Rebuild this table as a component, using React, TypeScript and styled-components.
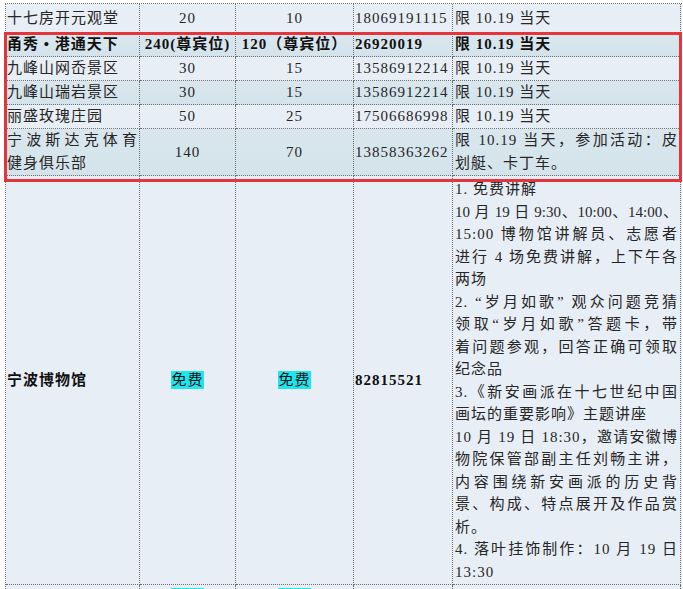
import React from "react";
import styled, { createGlobalStyle } from "styled-components";

const GlobalStyle = createGlobalStyle`
  html, body {
    margin: 0;
    padding: 0;
    background: #ffffff;
  }
  body {
    font-family: "Liberation Serif", "Noto Sans CJK SC", serif;
    font-size: 15px;
    color: #262626;
  }
`;

type Tone = "light" | "dark";
type Align = "left" | "center";

const LIGHT = "#e8eef5";
const DARK = "#d4e3eb";

const Sheet = styled.div`
  margin: 3px 0 0 5px;
  width: 676px;
  border-top: 1px dotted #6f6f6f;
  border-left: 1px dotted #6f6f6f;
  letter-spacing: 1px;
`;

const Row = styled.div<{ $tone: Tone; $bold?: boolean }>`
  display: grid;
  grid-template-columns: 134px 96px 118px 99px 228px;
  background: ${(p) =>
    p.$tone === "dark"
      ? `linear-gradient(180deg, #d9e6ee 0%, ${DARK} 100%)`
      : LIGHT};
  font-weight: ${(p) => (p.$bold ? 700 : 400)};
  color: ${(p) => (p.$bold ? "#111" : "#262626")};
`;

const Cell = styled.div<{ $align?: Align; $pad?: string; $strong?: boolean }>`
  display: flex;
  flex-direction: column;
  justify-content: center;
  box-sizing: border-box;
  min-width: 0;
  padding: ${(p) => p.$pad || "0 1px"};
  border-right: 1px dotted #6f6f6f;
  border-bottom: 1px dotted #6f6f6f;
  line-height: 23px;
  text-align: ${(p) => p.$align || "left"};
  white-space: nowrap;
  font-weight: ${(p) => (p.$strong ? 700 : "inherit")};
  color: ${(p) => (p.$strong ? "#111" : "inherit")};
`;

const TopCell = styled(Cell)`
  justify-content: flex-start;
  overflow: hidden;
`;

const Line = styled.div<{ $full?: boolean; $lh?: number; $tight?: boolean }>`
  text-align: ${(p) => (p.$full ? "justify" : "left")};
  text-align-last: ${(p) => (p.$full ? "justify" : "left")};
  line-height: ${(p) => (p.$lh ? `${p.$lh}px` : "23px")};
  letter-spacing: ${(p) => (p.$tight ? "0" : "1px")};
`;

const Marked = styled.span`
  background: #1ee6ef;
  color: #111;
  padding: 1px 0;
`;

const Highlighted = styled.div`
  position: relative;

  &::after {
    content: "";
    position: absolute;
    left: -2px;
    right: 0;
    top: -1px;
    bottom: -6px;
    border: 3px solid #e6343b;
    pointer-events: none;
    z-index: 2;
  }
`;

type Venue = {
  name: string[];
  adult: string;
  child: string;
  phone: string;
  note: string[];
  tone: Tone;
  bold?: boolean;
};

const venues: Venue[] = [
  {
    name: ["甬秀 • 港通天下"],
    adult: "240(尊宾位)",
    child: "120（尊宾位）",
    phone: "26920019",
    note: ["限 10.19 当天"],
    tone: "dark",
    bold: true,
  },
  {
    name: ["九峰山网岙景区"],
    adult: "30",
    child: "15",
    phone: "13586912214",
    note: ["限 10.19 当天"],
    tone: "light",
  },
  {
    name: ["九峰山瑞岩景区"],
    adult: "30",
    child: "15",
    phone: "13586912214",
    note: ["限 10.19 当天"],
    tone: "dark",
  },
  {
    name: ["丽盛玫瑰庄园"],
    adult: "50",
    child: "25",
    phone: "17506686998",
    note: ["限 10.19 当天"],
    tone: "light",
  },
  {
    name: ["宁波斯达克体育", "健身俱乐部"],
    adult: "140",
    child: "70",
    phone: "13858363262",
    note: ["限 10.19 当天，参加活动：皮", "划艇、卡丁车。"],
    tone: "dark",
  },
];

// [text, justified, tight]
const museumNotes: [string, boolean, boolean?][] = [
  ["1. 免费讲解", false],
  ["10 月 19 日 9:30、10:00、14:00、", true, true],
  ["15:00 博物馆讲解员、志愿者", true],
  ["进行 4 场免费讲解，上下午各", true],
  ["两场", false],
  ["2. “岁月如歌” 观众问题竞猜", true],
  ["领取“岁月如歌”答题卡，带", true],
  ["着问题参观，回答正确可领取", true],
  ["纪念品", false],
  ["3.《新安画派在十七世纪中国", true],
  ["画坛的重要影响》主题讲座", false],
  ["10 月 19 日 18:30，邀请安徽博", true],
  ["物院保管部副主任刘畅主讲，", true],
  ["内容围绕新安画派的历史背", true],
  ["景、构成、特点展开及作品赏", true],
  ["析。", false],
  ["4. 落叶挂饰制作：10 月 19 日", true],
  ["13:30", false],
];

function Lines({ lines }: { lines: string[] }) {
  return (
    <>
      {lines.map((text, i) => (
        <Line key={i} $full={lines.length > 1 && i < lines.length - 1}>
          {text}
        </Line>
      ))}
    </>
  );
}

export default function App() {
  return (
    <>
      <GlobalStyle />
      <Sheet>
        <Row $tone="light">
          <Cell $pad="3px 1px 2px">十七房开元观堂</Cell>
          <Cell $align="center">20</Cell>
          <Cell $align="center">10</Cell>
          <Cell>18069191115</Cell>
          <Cell $pad="0 2px">限 10.19 当天</Cell>
        </Row>

        <Highlighted>
          {venues.map((v) => (
            <Row key={v.name.join("")} $tone={v.tone} $bold={v.bold}>
              <Cell>
                <Lines lines={v.name} />
              </Cell>
              <Cell $align="center">{v.adult}</Cell>
              <Cell $align="center">{v.child}</Cell>
              <Cell>{v.phone}</Cell>
              <Cell $pad="0 2px">
                <Lines lines={v.note} />
              </Cell>
            </Row>
          ))}
        </Highlighted>

        <Row $tone="light">
          <Cell $strong>宁波博物馆</Cell>
          <Cell $align="center">
            <span>
              <Marked>免费</Marked>
            </span>
          </Cell>
          <Cell $align="center">
            <span>
              <Marked>免费</Marked>
            </span>
          </Cell>
          <Cell $strong>82815521</Cell>
          <Cell $pad="2px 2px 1px">
            {museumNotes.map(([text, full, tight], i) => (
              <Line key={i} $full={full} $tight={tight} $lh={22.5}>
                {text}
              </Line>
            ))}
          </Cell>
        </Row>

        <Row $tone="light">
          <TopCell $pad="1px 1px">&nbsp;</TopCell>
          <TopCell $align="center" $pad="1px 1px">
            <span>
              <Marked>免费</Marked>
            </span>
          </TopCell>
          <TopCell $align="center" $pad="1px 1px">
            <span>
              <Marked>免费</Marked>
            </span>
          </TopCell>
          <TopCell $pad="1px 1px">&nbsp;</TopCell>
          <TopCell $pad="1px 2px">&nbsp;</TopCell>
        </Row>
      </Sheet>
    </>
  );
}
